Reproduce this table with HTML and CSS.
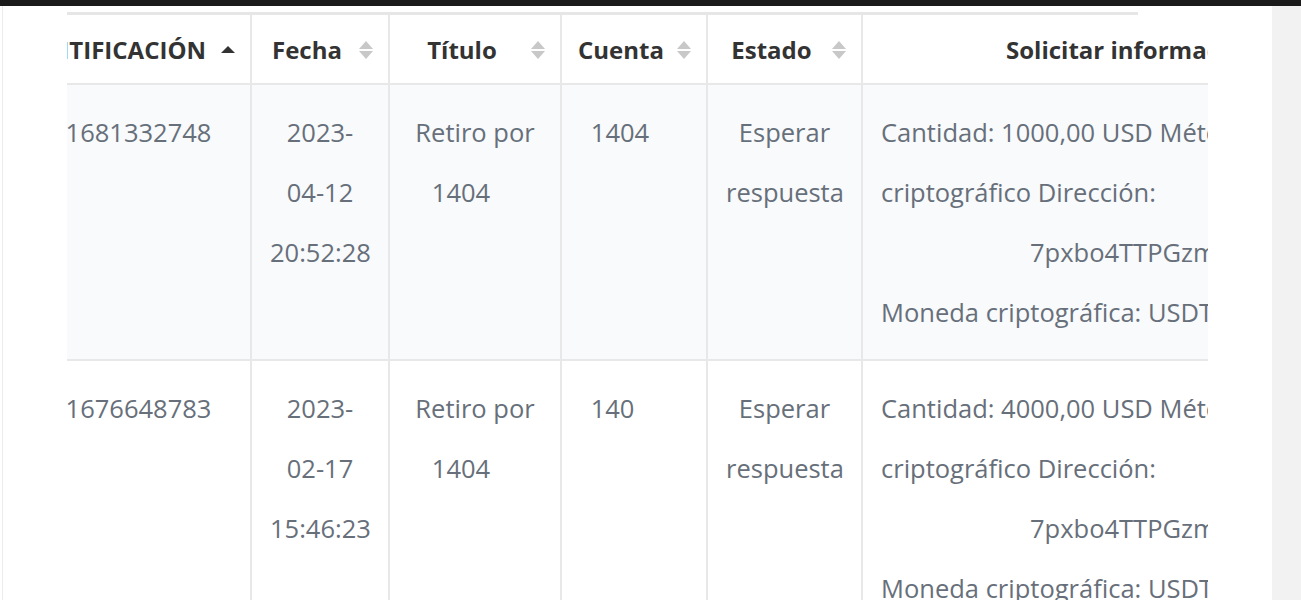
FILE: index.html
```html
<!DOCTYPE html>
<html lang="es">
<head>
<meta charset="utf-8">
<title>Solicitudes</title>
<link rel="stylesheet" href="styles.css">
</head>
<body>
<div class="topbar"></div>
<div class="page">
  <div class="gutter"></div>
  <div class="viewport">
    <div class="scrollbar"></div>
    <table class="grid">
      <colgroup>
        <col class="c-id"><col class="c-date"><col class="c-title"><col class="c-acc"><col class="c-state"><col class="c-desc">
      </colgroup>
      <thead>
        <tr>
          <th><div class="hcell"><div class="hlabel end"><span>IDENTIFICACIÓN</span></div><svg class="sort" viewBox="0 0 14 18"><path d="M0 12 L7 5 L14 12 Z" fill="#333"/></svg></div></th>
          <th><div class="hcell"><div class="hlabel"><span>Fecha</span></div><svg class="sort" viewBox="0 0 14 18"><path d="M0 8 L7 0 L14 8 Z M0 10 L7 18 L14 10 Z" fill="#c8c8c8"/></svg></div></th>
          <th><div class="hcell"><div class="hlabel"><span>Título</span></div><svg class="sort" viewBox="0 0 14 18"><path d="M0 8 L7 0 L14 8 Z M0 10 L7 18 L14 10 Z" fill="#c8c8c8"/></svg></div></th>
          <th><div class="hcell"><div class="hlabel"><span>Cuenta</span></div><svg class="sort" viewBox="0 0 14 18"><path d="M0 8 L7 0 L14 8 Z M0 10 L7 18 L14 10 Z" fill="#c8c8c8"/></svg></div></th>
          <th><div class="hcell"><div class="hlabel"><span>Estado</span></div><svg class="sort" viewBox="0 0 14 18"><path d="M0 8 L7 0 L14 8 Z M0 10 L7 18 L14 10 Z" fill="#c8c8c8"/></svg></div></th>
          <th class="h-desc"><div class="hcell"><div class="hlabel"><span>Solicitar información</span></div></div></th>
        </tr>
      </thead>
      <tbody>
        <tr class="odd">
          <td>1681332748</td>
          <td>2023-<br>04-12<br>20:52:28</td>
          <td>Retiro por<br>1404<span class="redact"></span></td>
          <td>1404<span class="redact"></span></td>
          <td>Esperar<br>respuesta</td>
          <td class="desc">Cantidad: 1000,00 USD Método<br>criptográfico Dirección:<br><span class="addr">7pxbo4TTPGzmQ</span>Moneda criptográfica: USDT-TRC20</td>
        </tr>
        <tr>
          <td>1676648783</td>
          <td>2023-<br>02-17<br>15:46:23</td>
          <td>Retiro por<br>1404<span class="redact"></span></td>
          <td>140<span class="redact wide"></span></td>
          <td>Esperar<br>respuesta</td>
          <td class="desc">Cantidad: 4000,00 USD Método<br>criptográfico Dirección:<br><span class="addr">7pxbo4TTPGzmQ</span>Moneda criptográfica: USDT-TRC20</td>
        </tr>
      </tbody>
    </table>
  </div>
  <div class="aside"></div>
  <div class="track"></div>
</div>
</body>
</html>
```

FILE: styles.css
```css
html, body {
  margin: 0;
  height: 600px;
  overflow: hidden;
  background: #ffffff;
  font-family: "Open Sans", "Noto Sans", sans-serif;
}

.topbar {
  height: 6px;
  background: #1b1b1b;
}

.page {
  display: flex;
  height: 594px;
}

.gutter {
  flex: none;
  width: 64px;
  margin-left: 2px;
  border-left: 1px solid #ececec;
}

.viewport {
  flex: none;
  width: 1141px;
  overflow: hidden;
}

.scrollbar {
  height: 3px;
  width: 1071px;
  margin-top: 6px;
  background: #e6e6e6;
}

.grid {
  table-layout: fixed;
  border-collapse: collapse;
  margin-left: -40px;
  width: 1371px;
}

.c-id { width: 224px; }
.c-date { width: 138px; }
.c-title { width: 172px; }
.c-acc { width: 146px; }
.c-state { width: 155px; }
.c-desc { width: 536px; }

.grid th {
  font-size: 24px;
  font-weight: 700;
  line-height: 32px;
  color: #333333;
  padding: 19px 15px 17px 18px;
  border-right: 2px solid #e8e8e8;
  border-bottom: 2px solid #e8e8e8;
  background: #ffffff;
}

.hcell {
  display: flex;
  align-items: center;
  gap: 15px;
}

.hlabel {
  flex: 1;
  min-width: 0;
  display: flex;
  justify-content: center;
  white-space: nowrap;
}

.hlabel.end {
  justify-content: flex-end;
}

.sort {
  flex: none;
  width: 14px;
  height: 18px;
}

.grid td {
  font-size: 25.5px;
  line-height: 60px;
  color: #676f7a;
  padding: 17px 18px;
  text-align: center;
  vertical-align: top;
  border-right: 2px solid #e8e8e8;
  border-bottom: 2px solid #e8e8e8;
}

.grid tr.odd td {
  background: #f8fafc;
}

.grid td.desc {
  text-align: left;
  white-space: nowrap;
}

.addr {
  display: block;
  padding-left: 149px;
}

.redact {
  display: inline-block;
  width: 28px;
}

.redact.wide {
  width: 43px;
}

.aside {
  flex: none;
  width: 64px;
}

.track {
  flex: none;
  width: 29px;
  background: #f2f2f2;
}
```
